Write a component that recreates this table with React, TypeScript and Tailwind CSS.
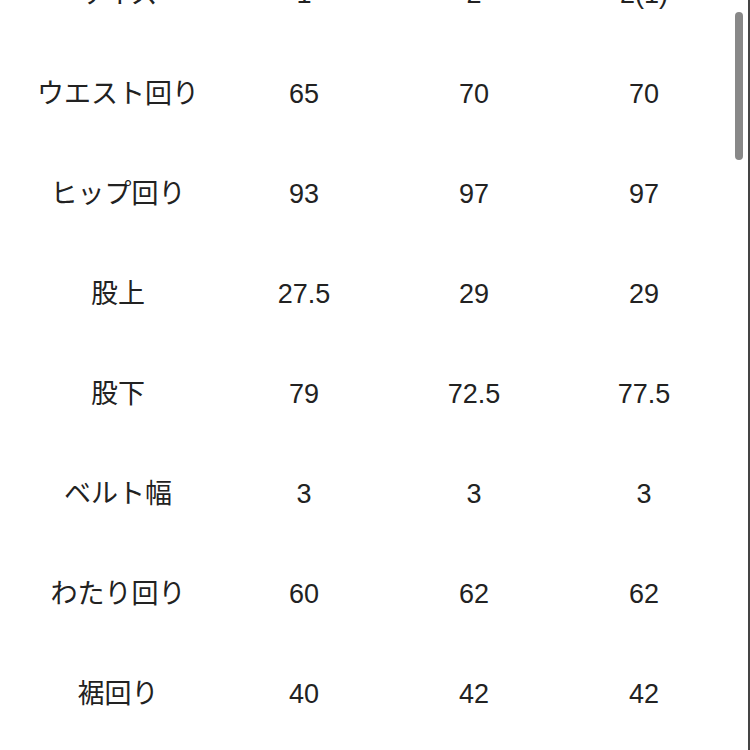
const rows: [string, string, string, string][] = [
  ["サイズ", "1", "2", "2(1)"],
  ["ウエスト回り", "65", "70", "70"],
  ["ヒップ回り", "93", "97", "97"],
  ["股上", "27.5", "29", "29"],
  ["股下", "79", "72.5", "77.5"],
  ["ベルト幅", "3", "3", "3"],
  ["わたり回り", "60", "62", "62"],
  ["裾回り", "40", "42", "42"],
];

export default function App() {
  return (
    <div
      className="relative h-[750px] w-[750px] overflow-hidden bg-white border-r-2 border-[#444] text-[#222] text-[27px]"
      style={{ fontFamily: '"Liberation Sans", "Noto Sans CJK JP", sans-serif' }}
    >
      <div className="-mt-[56px]">
        {rows.map((r) => (
          <div key={r[0]} className="grid h-[100px] grid-cols-[236px_136px_204px_136px] items-center">
            {r.map((c, i) => (
              <div key={i} className="text-center leading-none">
                {c}
              </div>
            ))}
          </div>
        ))}
      </div>
      <div className="absolute right-[5px] top-[12px] h-[148px] w-[8px] rounded-full bg-[#888]" />
    </div>
  );
}
